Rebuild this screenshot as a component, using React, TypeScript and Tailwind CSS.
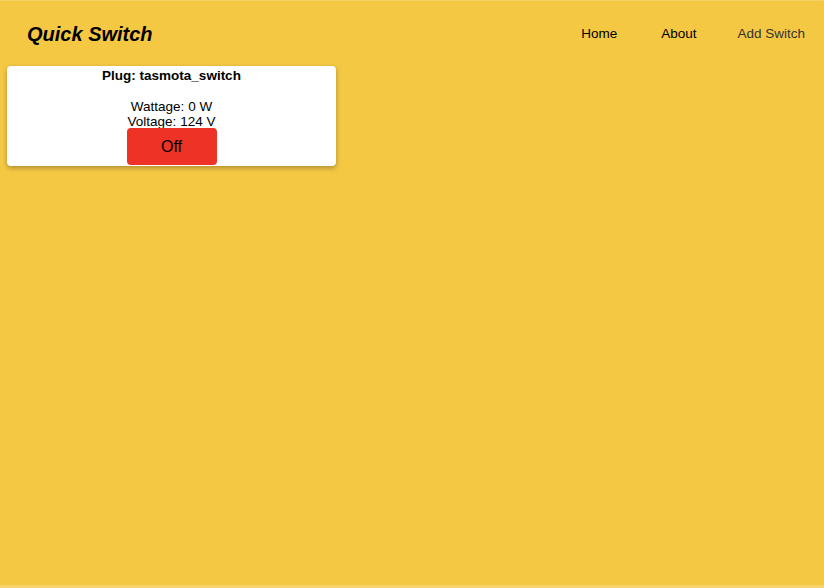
import React from "react";

interface PlugProps {
  name: string;
  wattage: number;
  voltage: number;
  isOn: boolean;
}

const PlugCard = ({ name, wattage, voltage, isOn }: PlugProps) => {
  return (
    <div className="flex w-[329px] flex-col items-center rounded-[4px] bg-white pt-[2px] pb-[1px] text-[13.5px] leading-[15px] text-black shadow-[0_2px_5px_rgba(0,0,0,0.3)]">
      <p className="h-[16px] leading-[16px] font-bold">Plug: {name}</p>
      <p className="mt-[15px] h-[15px]">Wattage: {wattage} W</p>
      <p className="h-[15px]">Voltage: {voltage} V</p>
      <button
        className={`-mt-[1px] h-[37px] w-[90px] rounded-[4px] text-[16px] text-black ${
          isOn ? "bg-[#3bb54a]" : "bg-[#ee3326]"
        }`}
      >
        {isOn ? "On" : "Off"}
      </button>
    </div>
  );
};

export default function App() {
  return (
    <div className="h-[588px] w-[824px] overflow-hidden bg-[#f5c844] font-['Liberation_Sans',Arial,sans-serif]">
      <div className="h-[585px] w-[823px] border-t border-[#f7d068] bg-[#f5c844]">
        <nav className="flex h-[64px] items-center justify-between pt-[2px] pr-[18px] pl-[27px]">
          <h1 className="text-[20px] font-bold italic text-black">Quick Switch</h1>
          <ul className="flex items-center text-[13.5px]">
            <li className="text-black">Home</li>
            <li className="ml-[44px] text-black">About</li>
            <li className="ml-[41px] text-[#333]">Add Switch</li>
          </ul>
        </nav>
        <div className="px-[7px] pt-[1px]">
          <PlugCard name="tasmota_switch" wattage={0} voltage={124} isOn={false} />
        </div>
      </div>
      <div className="h-[3px] w-full bg-[#f7d46e]" />
    </div>
  );
}
